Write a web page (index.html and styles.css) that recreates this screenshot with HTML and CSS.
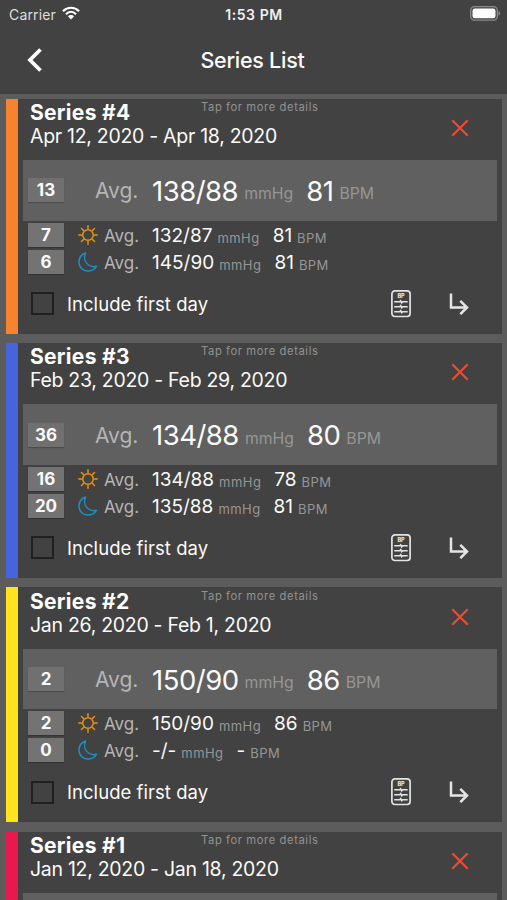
FILE: index.html
```html
<!DOCTYPE html>
<html lang="en">
<head>
<meta charset="utf-8">
<title>Series List</title>
<link rel="stylesheet" href="styles.css">
</head>
<body>
<svg class="defs" aria-hidden="true">
  <symbol id="sun" viewBox="0 0 20 20"><g fill="none" stroke="#e8920c" stroke-width="1.5" stroke-linecap="round"><circle cx="10" cy="10" r="5.3"/><path d="M10 .8v2.8M10 16.4v2.8M.8 10h2.8M16.4 10h2.8M3.5 3.5l2 2M14.5 14.5l2 2M3.5 16.500l2-2M14.500 5.500l2-2"/></g></symbol>
  <symbol id="moon" viewBox="0 0 20 20"><path d="M7.500 1C3.500 2.400 1 6 1 10.200c0 5 3.800 8.800 8.700 8.800 3.800 0 7-1.700 8.800-4.700-2.700.6-5.800.3-8-1.300C6.700 10.400 5.700 5.500 7.500 1z" fill="none" stroke="#1c8fc9" stroke-width="1.500" stroke-linejoin="round"/></symbol>
  <symbol id="close" viewBox="0 0 18 18"><path d="M1.300 1.300l15.400 15.400M16.700 1.300L1.300 16.700" stroke="#f04a35" stroke-width="2.200" fill="none"/></symbol>
  <symbol id="report" viewBox="0 0 20 28"><rect x=".9" y=".9" width="18.200" height="25.600" rx="3" fill="none" stroke="#e4e4e4" stroke-width="1.700"/><text x="10" y="8.200" class="bp" text-anchor="middle">BP</text><path d="M3.200 11.800h5.500l1-1 1 2 1-1h5M3.200 16.700h5.500l1-1 1 2 1-1h5M3.200 21.700h5.500l1-1 1 2 1-1h5" fill="none" stroke="#e4e4e4" stroke-width="1.600"/></symbol>
  <symbol id="enter" viewBox="0 0 20 22"><path d="M2 .5v14h16M11.300 7.800l6.700 6.700-6.700 6.700" fill="none" stroke="#e4e4e4" stroke-width="2.500"/></symbol>
</svg>
<header class="header">
  <div class="status">
    <span class="carrier">Carrier</span>
    <svg class="wifi" viewBox="0 0 18 14"><path d="M1 5.200C5.600.6 12.400.6 17 5.200M4 8.200c3-3 7-3 10 0" fill="none" stroke="#fff" stroke-width="2.200"/><path d="M5.900 10.300c1.900-1.600 4.300-1.600 6.200 0L9 13.500z" fill="#fff"/></svg>
    <span class="time">1:53 PM</span>
    <svg class="battery" viewBox="0 0 31 15"><rect x=".7" y=".7" width="26.600" height="13.400" rx="3.800" fill="none" stroke="#8c8c8c" stroke-width="1.300"/><rect x="2.500" y="2.500" width="23" height="9.800" rx="2.200" fill="#fff"/><path d="M28.500 5.200c2.200.6 2.200 3.800 0 4.400z" fill="#8c8c8c"/></svg>
  </div>
  <div class="nav">
    <svg class="back" viewBox="0 0 16 26"><path d="M13.500 2.500L3 13l10.500 10.500" fill="none" stroke="#fff" stroke-width="3.800"/></svg>
    <h1>Series List</h1>
  </div>
</header>
<main>
  <article class="card orange">
    <div class="head"><h2>Series #4</h2><span class="tap">Tap for more details</span><p>Apr 12, 2020 - Apr 18, 2020</p><svg class="close"><use href="#close"/></svg></div>
    <div class="total"><b class="count">13</b><span class="avg">Avg.</span><span class="val">138/88</span><span class="unit mm">mmHg</span><span class="val">81</span><span class="unit">BPM</span></div>
    <div class="rows">
      <div class="row"><b class="count">7</b><svg class="icon"><use href="#sun"/></svg><span class="avg">Avg.</span><span class="val">132/87</span><span class="unit mm">mmHg</span><span class="val">81</span><span class="unit">BPM</span></div>
      <div class="row"><b class="count">6</b><svg class="icon"><use href="#moon"/></svg><span class="avg">Avg.</span><span class="val">145/90</span><span class="unit mm">mmHg</span><span class="val">81</span><span class="unit">BPM</span></div>
    </div>
    <div class="foot"><i class="box"></i><span class="include">Include first day</span><svg class="report"><use href="#report"/></svg><svg class="enter"><use href="#enter"/></svg></div>
  </article>
  <article class="card blue">
    <div class="head"><h2>Series #3</h2><span class="tap">Tap for more details</span><p>Feb 23, 2020 - Feb 29, 2020</p><svg class="close"><use href="#close"/></svg></div>
    <div class="total"><b class="count">36</b><span class="avg">Avg.</span><span class="val">134/88</span><span class="unit mm">mmHg</span><span class="val">80</span><span class="unit">BPM</span></div>
    <div class="rows">
      <div class="row"><b class="count">16</b><svg class="icon"><use href="#sun"/></svg><span class="avg">Avg.</span><span class="val">134/88</span><span class="unit mm">mmHg</span><span class="val">78</span><span class="unit">BPM</span></div>
      <div class="row"><b class="count">20</b><svg class="icon"><use href="#moon"/></svg><span class="avg">Avg.</span><span class="val">135/88</span><span class="unit mm">mmHg</span><span class="val">81</span><span class="unit">BPM</span></div>
    </div>
    <div class="foot"><i class="box"></i><span class="include">Include first day</span><svg class="report"><use href="#report"/></svg><svg class="enter"><use href="#enter"/></svg></div>
  </article>
  <article class="card yellow">
    <div class="head"><h2>Series #2</h2><span class="tap">Tap for more details</span><p>Jan 26, 2020 - Feb 1, 2020</p><svg class="close"><use href="#close"/></svg></div>
    <div class="total"><b class="count">2</b><span class="avg">Avg.</span><span class="val">150/90</span><span class="unit mm">mmHg</span><span class="val">86</span><span class="unit">BPM</span></div>
    <div class="rows">
      <div class="row"><b class="count">2</b><svg class="icon"><use href="#sun"/></svg><span class="avg">Avg.</span><span class="val">150/90</span><span class="unit mm">mmHg</span><span class="val">86</span><span class="unit">BPM</span></div>
      <div class="row"><b class="count">0</b><svg class="icon"><use href="#moon"/></svg><span class="avg">Avg.</span><span class="val">-/-</span><span class="unit mm">mmHg</span><span class="val">-</span><span class="unit">BPM</span></div>
    </div>
    <div class="foot"><i class="box"></i><span class="include">Include first day</span><svg class="report"><use href="#report"/></svg><svg class="enter"><use href="#enter"/></svg></div>
  </article>
  <article class="card red">
    <div class="head"><h2>Series #1</h2><span class="tap">Tap for more details</span><p>Jan 12, 2020 - Jan 18, 2020</p><svg class="close"><use href="#close"/></svg></div>
    <div class="total"></div>
  </article>
</main>
</body>
</html>
```
FILE: styles.css
```css
* { box-sizing: border-box; margin: 0; padding: 0; }
html, body { height: 900px; overflow: hidden; }
body { background: #5c5c5c; color: #fafafa; font-family: Inter, "Liberation Sans", sans-serif; display: flex; flex-direction: column; }
svg { flex: none; display: block; }
.defs { display: none; }
.header { height: 94px; flex: none; background: #424242; }
.status { height: 28px; display: grid; grid-template-columns: 53px 1fr auto 1fr 53px; align-items: center; padding: 0 6px 0 9px; }
.carrier { font-size: 14px; letter-spacing: .15px; color: #dedede; }
.wifi { width: 18px; height: 14px; margin-top: -2px; }
.time { font-size: 14px; letter-spacing: .55px; font-weight: 600; color: #f0f0f0; position: relative; left: -1px; }
.battery { width: 31px; height: 15px; grid-column: 5; justify-self: end; margin-top: -2px; }
.nav { height: 64px; display: grid; grid-template-columns: 60px 1fr 60px; align-items: center; }
.back { width: 16px; height: 26px; margin-left: 27px; }
h1 { font-size: 21.500px; letter-spacing: -.25px; font-weight: 500; text-align: center; line-height: 28px; padding-right: 2px; }
main { padding: 4.500px 5px 0 6px; flex: 1; min-height: 0; overflow: hidden; }
.card { height: 235px; margin-bottom: 9.400px; background: #424242; border-left: 12px solid; padding: 1.500px 5px 0; display: flex; flex-direction: column; }
.orange { border-color: #f8832f; }
.blue { border-color: #4664dc; }
.yellow { border-color: #ffe31c; }
.red { border-color: #e9184f; margin-bottom: 0; }
.head { height: 60px; flex: none; display: grid; grid-template-columns: 171px 1fr 18px; grid-template-rows: 24px 24px; padding: 0 28px 0 7px; white-space: nowrap; }
h2 { font-size: 21px; letter-spacing: .3px; line-height: 25px; font-weight: 700; color: #fff; }
.tap { font-size: 11.200px; line-height: 14px; letter-spacing: .6px; color: #929292; }
.head p { font-size: 19.500px; letter-spacing: -.29px; line-height: 24px; grid-column: 1; grid-row: 2; }
.close { width: 18px; height: 18px; grid-column: 3; grid-row: 1 / 3; margin-top: 19px; }
.total { height: 60.500px; flex: none; background: #606060; display: flex; align-items: center; padding-left: 5px; line-height: 34px; }
.count { width: 36px; height: 24px; line-height: 24px; flex: none; text-align: center; font-size: 17px; font-weight: 700; background: #707070; box-shadow: 0 1px 1px #0003; }
.total .avg { font-size: 21px; width: 57px; margin-left: 31px; color: #b5b5b5; position: relative; top: 1px; }
.total .val { font-size: 27.500px; letter-spacing: -.5px; position: relative; top: .5px; }
.unit { color: #969696; }
.total .unit { font-size: 15.800px; margin-left: 6px; position: relative; top: 4px; }
.total .mm { margin-right: 13px; }
.rows { padding: 2px 0 0 5px; display: flex; flex-direction: column; gap: 3px; }
.row { height: 24px; display: flex; align-items: center; line-height: 24px; }
.row .count { background: #737373; }
.icon { width: 20px; height: 20px; margin-left: 14px; }
.row .avg { font-size: 17px; width: 48px; margin-left: 6px; color: #b5b5b5; position: relative; top: 1px; }
.row .val { font-size: 19px; position: relative; top: 1px; }
.row .unit { font-size: 13px; letter-spacing: .45px; margin-left: 5px; position: relative; top: 3px; }
.row .mm { margin-right: 13px; }
.foot { height: 28px; margin-top: 16px; display: flex; align-items: center; padding: 0 28px 0 8px; }
.box { width: 23px; height: 23px; border: 2px solid #202020; }
.include { font-size: 18.500px; letter-spacing: .05px; margin-left: 13px; flex: 1; }
.report { width: 20px; height: 28px; }
.enter { width: 20px; height: 22px; margin-left: 38px; }
.bp { font: 800 5.500px Inter, sans-serif; fill: #e4e4e4; }
```
